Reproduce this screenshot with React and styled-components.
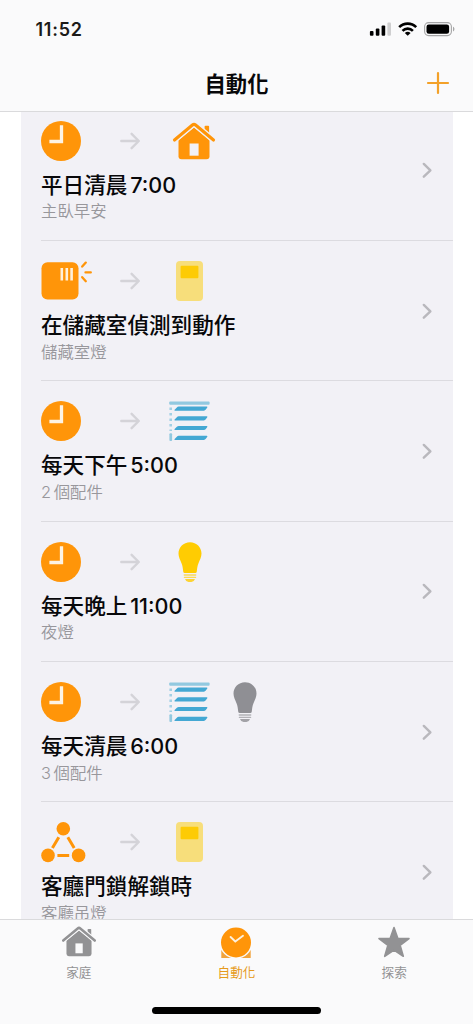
import React from "react";
import styled, { createGlobalStyle } from "styled-components";

const ORANGE = "#ff9509";
const GREY = "#929294";
const CARD = "#f2f1f6";

const GlobalStyle = createGlobalStyle`
  *, *::before, *::after { box-sizing: border-box; }
  html, body { margin: 0; padding: 0; background: #fff; }
  body { font-family: Inter, "Noto Sans CJK TC", sans-serif; color: #08080a; }
  svg { display: block; flex: none; overflow: visible; }
`;

const Screen = styled.div`
  display: flex;
  flex-direction: column;
  width: 473px;
  height: 1024px;
  overflow: hidden;
  background: #fff;
`;

const Header = styled.header`
  flex: none;
  height: 112px;
  background: #fafafb;
  border-bottom: 1px solid #dadadc;
  z-index: 1;
`;

const StatusBar = styled.div`
  display: flex;
  align-items: center;
  justify-content: space-between;
  height: 58px;
  padding: 0 18px 0 35.5px;
`;

const Time = styled.span`
  padding-top: 1px;
  font-size: 18px;
  font-weight: 600;
  line-height: 22px;
  letter-spacing: 0.75px;
  color: #1c1a18;
`;

const StatusIcons = styled.div`
  display: flex;
  align-items: center;
  gap: 7px;
`;

const NavBar = styled.div`
  display: grid;
  grid-template-columns: 1fr auto 1fr;
  align-items: center;
  height: 50px;
  padding: 0 24px;
`;

const NavTitle = styled.h1`
  grid-column: 2;
  margin: 0;
  padding-top: 1px;
  font-size: 21.3px;
  font-weight: 600;
  line-height: 30px;
`;

const AddButton = styled.button`
  justify-self: end;
  padding: 0;
  border: 0;
  background: none;
`;

const Content = styled.main`
  flex: 1;
  min-height: 0;
  overflow: hidden;
  padding: 0 20.5px;
`;

const List = styled.ul`
  margin: -11.3px 0 0;
  padding: 0 0 0 20.5px;
  list-style: none;
  background: ${CARD};
`;

const Row = styled.li`
  display: flex;
  align-items: center;
  justify-content: space-between;
  height: 140.35px;
  padding-right: 20.5px;
  border-bottom: 1px solid #dcdbe0;
`;

const RowBody = styled.div`
  align-self: flex-start;
  padding-top: 20px;
`;

const IconLine = styled.div`
  display: flex;
  align-items: center;
  height: 40px;
`;

const TriggerSlot = styled.div`
  width: 79px;
`;

const ActionSlots = styled.div`
  display: flex;
  gap: 15px;
  margin-left: 29.5px;
`;

const ActionSlot = styled.div`
  display: flex;
  align-items: center;
  justify-content: center;
  width: 40px;
  height: 40px;
  padding-left: ${(p) => (p.$shift ? "8px" : "0")};
`;

const RowTitle = styled.div`
  margin-top: 9px;
  font-size: 21.6px;
  font-weight: 500;
  line-height: 30px;
  white-space: nowrap;
  word-spacing: -3px;
`;

const RowSub = styled.div`
  margin-top: 0.5px;
  font-size: 16.4px;
  font-weight: 350;
  line-height: 22px;
  color: #98979c;
  white-space: nowrap;
  word-spacing: -2px;
`;

const TabBar = styled.nav`
  flex: none;
  height: 105px;
  display: flex;
  flex-direction: column;
  align-items: center;
  background: #fafafb;
  border-top: 1px solid #dadadc;
`;

const Tabs = styled.div`
  display: grid;
  grid-template-columns: repeat(3, 1fr);
  width: 100%;
  height: 87px;
`;

const Tab = styled.div`
  display: flex;
  flex-direction: column;
  align-items: center;
  padding-top: 6px;
  color: ${(p) => (p.$active ? "#e69a1c" : GREY)};
`;

const TabLabel = styled.span`
  margin-top: 4.5px;
  font-size: 12.6px;
  font-weight: 400;
  line-height: 18px;
`;

const HomeIndicator = styled.div`
  width: 169px;
  height: 6.5px;
  border-radius: 4px;
  background: #000;
`;

const Signal = () => (
  <svg width="22" height="14" viewBox="0 0 22 14">
    <rect x="0.9" y="9" width="3.6" height="4.8" rx="1" />
    <rect x="6.8" y="6.4" width="3.6" height="7.4" rx="1" />
    <rect x="12.6" y="3.4" width="3.6" height="10.4" rx="1" />
    <rect x="18.4" y="0.4" width="3.6" height="13.4" rx="1" fill="#cfcfd0" />
  </svg>
);

const Wifi = () => (
  <svg width="19" height="14" viewBox="0 0 19 14" fill="none" stroke="#000" strokeWidth="2.6">
    <path d="M1.2 5.2a12 12 0 0 1 17 0" />
    <path d="M4.5 8.8a7.4 7.4 0 0 1 10.400 0" />
    <path d="M9.700 13.800L6.800 11.100a4.200 4.200 0 0 1 5.800 0z" fill="#000" stroke="none" />
  </svg>
);

const Battery = () => (
  <svg width="31" height="14" viewBox="0 0 31 14">
    <rect x="0.6" y="0.6" width="26.8" height="13" rx="4" fill="none" stroke="#a5a5a6" strokeWidth="1.1" />
    <rect x="2.5" y="2.4" width="22.6" height="9.4" rx="2.3" />
    <path d="M29 4.8c1.9.6 1.9 4 0 4.6z" fill="#a5a5a6" />
  </svg>
);

const Plus = () => (
  <svg width="22" height="22" viewBox="0 0 22 22" stroke="#f3a129" strokeWidth="2.2" strokeLinecap="round">
    <path d="M11 1v20M1 11h20" />
  </svg>
);

const Clock = () => (
  <svg width="40" height="40" viewBox="0 0 40 40">
    <circle cx="20" cy="20" r="20" fill={ORANGE} />
    <path d="M20.5 4.300V20.500H8.400" fill="none" stroke="#fdf3e4" strokeWidth="3.300" />
  </svg>
);

const Motion = () => (
  <svg width="52" height="40" viewBox="0 0 52 40">
    <rect x="0.500" y="1.200" width="37" height="37.400" rx="6" fill={ORANGE} />
    <path d="M20.800 7v12.600M25.800 7v12.600M30.600 7v12.600" stroke="#fff0da" strokeWidth="2.600" />
    <path d="M41.200 5.600l3.600-4M44.500 11.400h5.300M41.200 16.200l3.600 4" stroke={ORANGE} strokeWidth="2.300" strokeLinecap="round" />
  </svg>
);

const Network = () => (
  <svg width="44" height="40" viewBox="0 0 44 40" fill={ORANGE}>
    <circle cx="22.3" cy="6.8" r="6.8" />
    <circle cx="7" cy="33.4" r="6.8" />
    <circle cx="37.6" cy="33.4" r="6.8" />
    <path d="M17.8 15.2L11.4 26M26.8 15.2L33.2 26M16.4 33.4h11.8" stroke={ORANGE} strokeWidth="3" />
  </svg>
);

const Arrow = () => (
  <svg width="20" height="16" viewBox="0 0 20 16" fill="none" stroke="#d4d3d8" strokeWidth="2.4" strokeLinecap="round" strokeLinejoin="round">
    <path d="M1.3 8H18.6M11.6 .8l7.2 7.2-7.2 7.2" />
  </svg>
);

const Chevron = () => (
  <svg width="10" height="16" viewBox="0 0 10 16" fill="none" stroke="#b9b8bd" strokeWidth="2.4" strokeLinecap="round" strokeLinejoin="round">
    <path d="M1.800 1.900L8.400 8.300l-6.600 6.400" />
  </svg>
);

const House = ({ color = ORANGE, hole = CARD, width = 42 }) => (
  <svg width={width} height={(width * 38) / 42} viewBox="0 0 42 38">
    <path d="M31.600 4.700q0-.9.900-.9h2.700q.9 0 .9.900v10h-4.500z" fill={color} />
    <path d="M21 5.600L36.500 18V34.300q0 3-3 3h-25q-3 0-3-3V18z" fill={color} />
    <path d="M1.500 18L19.400 3q1.600-1.300 3.200 0L40.500 18" fill="none" stroke={hole} strokeWidth="5.800" />
    <path d="M1.500 18L19.400 3q1.600-1.300 3.200 0L40.500 18" fill="none" stroke={color} strokeWidth="3.100" strokeLinecap="round" />
    <rect x="16.600" y="21.500" width="9" height="12.200" fill={hole} />
  </svg>
);

const Switch = () => (
  <svg width="27" height="40" viewBox="0 0 27 40">
    <rect width="27" height="40" rx="4" fill="#f7de7b" />
    <rect x="4.6" y="4.8" width="17.8" height="12.5" rx="1" fill="#fdcb05" />
  </svg>
);

const Blinds = () => (
  <svg width="40" height="40" viewBox="0 0 40 40">
    <rect x="-0.8" y="0.5" width="40.4" height="3.2" rx="1" fill="#92c9e0" />
    <path d="M0.7 6.5V30" stroke="#a3d0e4" strokeWidth="2.6" strokeDasharray="2.5 3" />
    <rect x="-0.6" y="32.3" width="2.7" height="7.6" rx="1" fill="#92c9e0" />
    {[5.6, 15.3, 25, 34.8].map((y) => (
      <path
        key={y}
        transform={`translate(0 ${y})`}
        d="M6.600 1.100q1-1.100 2.200-1.100H36.600q1.200 0 .7 1L35.800 3q-.7 1.100-1.900 1.100H5.200q-1.400 0-.6-1z"
        fill="#44a8d3"
      />
    ))}
  </svg>
);

const Bulb = ({ color }) => (
  <svg width="24" height="40" viewBox="0 0 24 40" fill={color}>
    <path d="M12 .2C18.600.2 23.500 5.200 23.500 11.600c0 3.600-1.700 6.500-3 9.600-1 2.400-1.400 5-1.700 8.200q-.2 1.500-1.500 1.500H6.700q-1.300 0-1.500-1.500C4.900 26.200 4.500 23.600 3.500 21.200 2.200 18.100.5 15.200.5 11.600.5 5.200 5.400.2 12 .2z" />
    <rect x="5.6" y="32.300" width="12.800" height="1.500" rx=".7" opacity=".65" />
    <rect x="5.800" y="34.800" width="12.400" height="1.300" rx=".6" opacity=".65" />
    <path d="M7 37h10q-.9 2.900-3.500 2.900h-3Q7.900 39.900 7 37z" opacity=".8" />
  </svg>
);

const Alarm = () => (
  <svg width="32" height="33" viewBox="0 0 32 33">
    <path d="M1.300 31.900V25q0-1.600 1.300-1.600h26.800q1.300 0 1.300 1.600v6.900z" fill="#f1a33b" />
    <circle cx="16" cy="16.500" r="16.400" fill="#fafafb" />
    <circle cx="16" cy="16.500" r="15" fill={ORANGE} />
    <path d="M10.600 11l4.700 4.500 7.700-5.700" fill="none" stroke="#fdf1de" strokeWidth="1.900" strokeLinecap="round" />
  </svg>
);

const Star = () => (
  <svg width="32" height="33" viewBox="0 0 32 33">
    <path
      d="M16 1.500L19.800 12.200 31 12.500 22.100 19.300 25.300 30.300 16 24 6.700 30.300 9.900 19.300 1 12.500 12.200 12.200z"
      fill={GREY}
      stroke={GREY}
      strokeWidth="1.600"
      strokeLinejoin="round"
    />
  </svg>
);

const TabIcon = styled.div`
  display: flex;
  align-items: flex-start;
  justify-content: center;
  height: 33px;
`;

const automations = [
  { trigger: <Clock />, actions: [<House />], shift: true, title: "平日清晨 7:00", sub: "主臥早安" },
  { trigger: <Motion />, actions: [<Switch />], title: "在儲藏室偵測到動作", sub: "儲藏室燈" },
  { trigger: <Clock />, actions: [<Blinds />], title: "每天下午 5:00", sub: "2 個配件" },
  { trigger: <Clock />, actions: [<Bulb color="#ffcc02" />], title: "每天晚上 11:00", sub: "夜燈" },
  { trigger: <Clock />, actions: [<Blinds />, <Bulb color="#8f8f94" />], title: "每天清晨 6:00", sub: "3 個配件" },
  { trigger: <Network />, actions: [<Switch />], title: "客廳門鎖解鎖時", sub: "客廳吊燈" },
];

const tabs = [
  { label: "家庭", icon: <House color={GREY} hole="#fafafb" width={34} /> },
  { label: "自動化", icon: <Alarm />, active: true },
  { label: "探索", icon: <Star /> },
];

export default function App() {
  return (
    <Screen lang="zh-Hant">
      <GlobalStyle />
      <Header>
        <StatusBar>
          <Time>11:52</Time>
          <StatusIcons>
            <Signal />
            <Wifi />
            <Battery />
          </StatusIcons>
        </StatusBar>
        <NavBar>
          <NavTitle>自動化</NavTitle>
          <AddButton aria-label="新增">
            <Plus />
          </AddButton>
        </NavBar>
      </Header>
      <Content>
        <List>
          {automations.map((a) => (
            <Row key={a.title}>
              <RowBody>
                <IconLine>
                  <TriggerSlot>{a.trigger}</TriggerSlot>
                  <Arrow />
                  <ActionSlots>
                    {a.actions.map((icon, i) => (
                      <ActionSlot key={i} $shift={a.shift}>
                        {icon}
                      </ActionSlot>
                    ))}
                  </ActionSlots>
                </IconLine>
                <RowTitle>{a.title}</RowTitle>
                <RowSub>{a.sub}</RowSub>
              </RowBody>
              <Chevron />
            </Row>
          ))}
        </List>
      </Content>
      <TabBar>
        <Tabs>
          {tabs.map((t) => (
            <Tab key={t.label} $active={t.active}>
              <TabIcon>{t.icon}</TabIcon>
              <TabLabel>{t.label}</TabLabel>
            </Tab>
          ))}
        </Tabs>
        <HomeIndicator />
      </TabBar>
    </Screen>
  );
}
